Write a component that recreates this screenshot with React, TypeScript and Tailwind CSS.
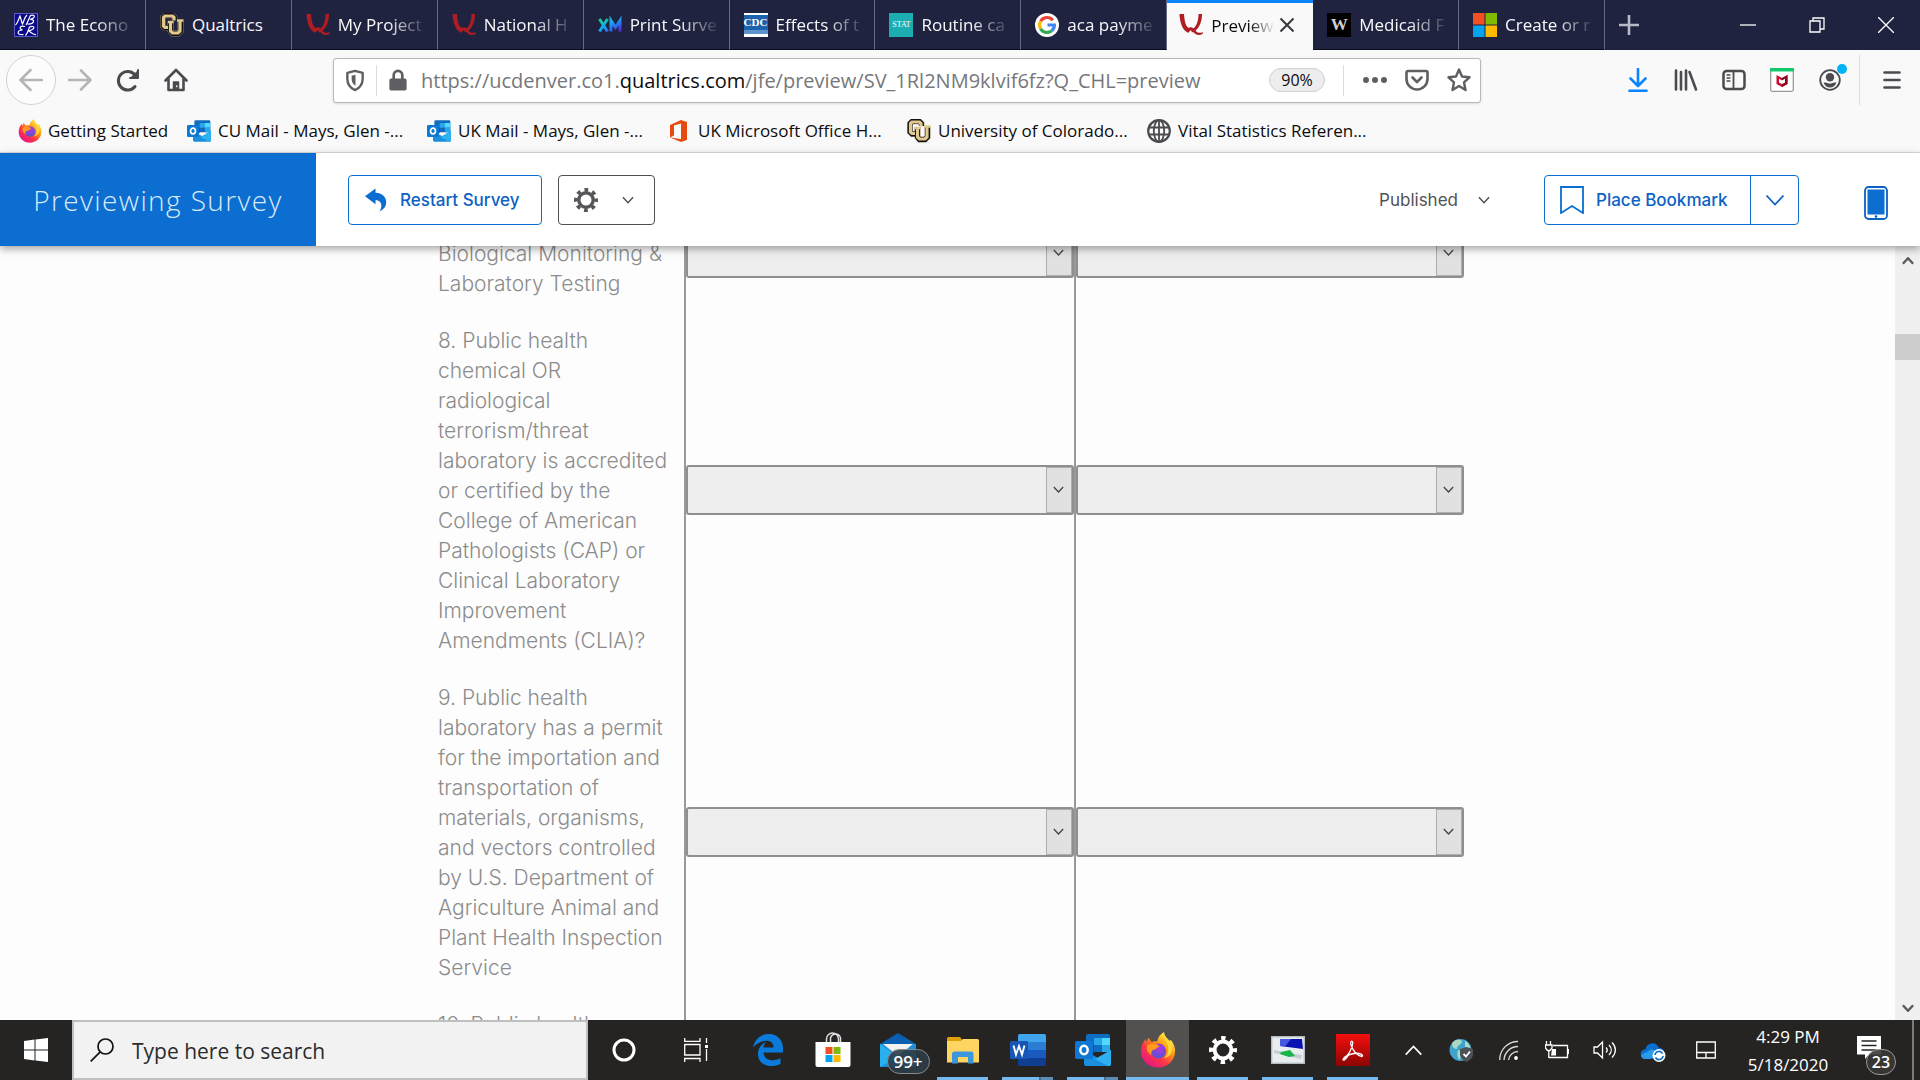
import type { ReactNode } from 'react';

const seg = "font-['Open_Sans',sans-serif]";

/* ---------- favicons ---------- */

function QualtricsQ() {
  return (
    <svg viewBox="0 0 24 24" className="h-6 w-6 shrink-0">
      <path d="M.5 1 H5 C5.500 8 6.500 13.500 10.500 15.500 L9.500 20 C3.500 17.500 .8 9.500 .5 1 Z" fill="#b01c22" />
      <path d="M19.500 1 H23 C23 9 20 17 13 19.500 L12 17 C17.500 14.500 19.500 8 19.500 1 Z" fill="#b01c22" />
      <path d="M7.500 17 C10.500 12.500 14.500 14 16.500 17.500 C18 20 21 20.500 24 19 L23.500 21 C20 23 16 22 14 18.500 C12.500 16.500 11 17 10 19.500 Z" fill="#b01c22" />
    </svg>
  );
}

function CuLogo() {
  return (
    <svg viewBox="0 0 24 24" className="h-6 w-6 shrink-0" fill="none">
      <path d="M14.500 7 V4.500 L12.500 2.500 H5 L3 4.500 V13 L5 15 H10" stroke="#8a8470" strokeWidth="5.600" />
      <path d="M10.500 8 V18 L12.500 20.500 H18 L20.500 18 V8" stroke="#8a8470" strokeWidth="6" />
      <path d="M14.500 7 V4.500 L12.500 2.500 H5 L3 4.500 V13 L5 15 H10" stroke="#14120e" strokeWidth="4.800" />
      <path d="M14 7.500 V4.500 L12.500 3 H5 L3.500 4.500 V13 L5 14.500 H9" stroke="#e0c88f" strokeWidth="3.200" />
      <path d="M10.500 9 V18 L12.500 20.500 H18 L20.500 18 V8" stroke="#14120e" strokeWidth="5" />
      <path d="M10.500 10 V18 L12.500 20 H18 L20 18 V8" stroke="#e0c88f" strokeWidth="3.200" />
      <path d="M8 9 H13.500 M17 7.500 H23.500" stroke="#e0c88f" strokeWidth="2.600" />
    </svg>
  );
}

function NberIcon() {
  return (
    <svg viewBox="0 0 24 24" className="h-6 w-6 shrink-0">
      <rect width="24" height="24" fill="#0a0a8c" />
      <rect x=".5" y=".5" width="23" height="23" fill="none" stroke="#5c5cc8" />
      <path d="M1.500 12 C4 10 4.500 6 6 3 C7 6 7.500 9 8.500 11 C10 8 10.500 4 13 2 M12 12 C14 9 15 5 16.500 2.500 C21 1 22.500 4.500 16 6.500 C22 6 20 11.500 13.500 11 M11 13.500 C6.500 12 4 15.500 8.500 17 C3 17 2 22.500 9.500 21.500 M11.500 22.500 C14 20 14.500 17 15.500 14 C21 12 22 16 14.500 18 C17 19 18.500 22 22 21.500" fill="none" stroke="#fff" strokeWidth="1.200" />
    </svg>
  );
}

function XmIcon() {
  return (
    <svg viewBox="0 0 24 24" className="h-6 w-6 shrink-0">
      <defs>
        <linearGradient id="xm" x1="0" y1="0" x2="1" y2="1">
          <stop offset="0" stopColor="#22d07c" />
          <stop offset=".45" stopColor="#13a5f3" />
          <stop offset="1" stopColor="#5b1fe0" />
        </linearGradient>
      </defs>
      <path d="M1.500 6 L9.500 18.500 M9.500 6 L1.500 18.500 M13 18.500 V7.500 L17.500 14.500 L22 7.500 V18.500" fill="none" stroke="url(#xm)" strokeWidth="3" />
    </svg>
  );
}

function CdcIcon() {
  return (
    <span className="flex h-6 w-6 shrink-0 flex-col items-stretch justify-center bg-white">
      <span className="flex h-[15px] items-center justify-center bg-[#1d62ad] font-['Liberation_Serif',serif] text-[11px] font-bold leading-none text-white">CDC</span>
      <span className="h-[4px] bg-[#5f93cb]" />
    </span>
  );
}

function StatIcon() {
  return <span className="flex h-6 w-6 shrink-0 items-center justify-center bg-[#1cadb3] font-['Liberation_Serif',serif] text-[8px] leading-none text-white">STAT</span>;
}

function GoogleIcon() {
  return (
    <svg viewBox="0 0 24 24" className="h-6 w-6 shrink-0">
      <circle cx="12" cy="12" r="12" fill="#fff" />
      <g fill="none" strokeWidth="3.200">
        <path d="M17.800 7.200 A7.400 7.400 0 0 0 5.600 8.300" stroke="#ea4335" />
        <path d="M5.600 8.300 A7.400 7.400 0 0 0 5.600 15.700" stroke="#fbbc05" />
        <path d="M5.600 15.700 A7.400 7.400 0 0 0 16.800 17.700" stroke="#34a853" />
        <path d="M16.800 17.700 A7.400 7.400 0 0 0 19.400 12 H12.500" stroke="#4285f4" />
      </g>
    </svg>
  );
}

function WIcon() {
  return <span className="flex h-6 w-6 shrink-0 items-center justify-center bg-black font-['Liberation_Serif',serif] text-[17px] font-bold leading-none text-[#d0d0d0]">W</span>;
}

function MicrosoftIcon() {
  return (
    <svg viewBox="0 0 24 24" className="h-6 w-6 shrink-0">
      <path d="M0 0h11.500v11.500H0z" fill="#f25022" />
      <path d="M12.500 0H24v11.500H12.500z" fill="#7fba00" />
      <path d="M0 12.500h11.500V24H0z" fill="#00a4ef" />
      <path d="M12.500 12.500H24V24H12.500z" fill="#ffb900" />
    </svg>
  );
}

function FirefoxIcon({ className }: { className: string }) {
  return (
    <svg viewBox="0 0 36 36" className={className}>
      <defs>
        <linearGradient id="ffa" x1=".85" y1=".1" x2=".2" y2=".95">
          <stop offset="0" stopColor="#fff44f" />
          <stop offset=".35" stopColor="#ff980e" />
          <stop offset=".65" stopColor="#ff3647" />
          <stop offset="1" stopColor="#e31587" />
        </linearGradient>
        <radialGradient id="ffb" cx=".55" cy=".3" r=".8">
          <stop offset="0" stopColor="#b833e1" />
          <stop offset="1" stopColor="#3f5ccf" />
        </radialGradient>
      </defs>
      <path d="M18 35.500 C8 35.500 1 28 1 19 C1 14 3 10 5.500 7 L6.500 10 L8.500 5.500 L11.500 10 C13.500 9 15.500 9 17 9.500 C18 5 20.500 2 24 0 C24 4 27 6 29 9 L31 8 C34 12 35.500 16 35 20 C34.500 29 27 35.500 18 35.500 Z" fill="url(#ffa)" />
      <circle cx="18.500" cy="19" r="7.600" fill="url(#ffb)" />
      <path d="M7 14 C10 10 17 11 19.500 14.500 C17 15 16.500 17.500 13 18 C11 19 11 21 11.500 23 C7.500 21 6 17 7 14 Z" fill="#ff9a1a" />
      <path d="M24 0 C23 6 27 9 28 14 C29 19 27 24 24 26 C31 25 34 18 31 11 C29 7 24 5 24 0 Z" fill="#ffd93a" />
    </svg>
  );
}

function OutlookIcon({ className }: { className: string }) {
  return (
    <svg viewBox="0 0 36 34" className={className}>
      <path d="M11 3 a2 2 0 0 1 2-2 h20 a2 2 0 0 1 2 2 v16 H11z" fill="#0f6cc0" />
      <path d="M19 5 h8 v7 h-8z" fill="#28a8ea" />
      <path d="M27 5 h8 v7 h-8z" fill="#50d9ff" />
      <path d="M27 12 h8 v7 h-8z" fill="#28a8ea" />
      <path d="M11 12 h8 v8 h-8z" fill="#0a4f9a" />
      <path d="M9 17 L23 25 L36 17 V31 a2 2 0 0 1-2 2 H11 a2 2 0 0 1-2-2z" fill="#1b8fdd" />
      <path d="M36 17 L20 26 L33 33 H34 a2 2 0 0 0 2-2z" fill="#2fb0f0" />
      <rect x="0" y="8" width="18" height="18" rx="1.800" fill="#0f78d4" />
      <ellipse cx="9" cy="17" rx="3.700" ry="4.200" fill="none" stroke="#fff" strokeWidth="2.500" />
    </svg>
  );
}

function OfficeIcon() {
  return (
    <svg viewBox="0 0 24 24" className="h-6 w-6 shrink-0">
      <path d="M3 6 L14 1 L20 3 V21 L14 23 L3 18.500 L14 20 V4.500 L7 6.500 V16.500 L3 18.500 Z" fill="#e64a0f" />
    </svg>
  );
}

function GlobeIcon() {
  return (
    <svg viewBox="0 0 24 24" className="h-6 w-6 shrink-0" fill="none" stroke="#4a4a4f" strokeWidth="1.800">
      <circle cx="12" cy="12" r="10.800" strokeWidth="2.200" />
      <ellipse cx="12" cy="12" rx="5.200" ry="10.800" />
      <path d="M12 1 V23 M1.500 8.500 H22.500 M1.500 15.500 H22.500" />
    </svg>
  );
}

/* ---------- browser chrome ---------- */

const tabsBefore: [string, ReactNode][] = [
  ['The Econo', <NberIcon />],
  ['Qualtrics', <CuLogo />],
  ['My Project', <QualtricsQ />],
  ['National H', <QualtricsQ />],
  ['Print Surve', <XmIcon />],
  ['Effects of t', <CdcIcon />],
  ['Routine ca', <StatIcon />],
  ['aca payme', <GoogleIcon />],
];
const tabsAfter: [string, ReactNode][] = [
  ['Medicaid F', <WIcon />],
  ['Create or r', <MicrosoftIcon />],
];

function Tab({ title, icon }: { title: string; icon: ReactNode }) {
  return (
    <button className="flex h-[50px] min-w-0 items-center border-r border-b border-r-[#6a6b80] border-b-[#0c0c20] pl-[14px] pr-2 text-[#f9f9fa]">
      {icon}
      <span className={`ml-2 min-w-0 flex-1 overflow-hidden whitespace-nowrap pt-px text-left ${title === 'Qualtrics' ? '' : 'mask-r-from-55%'}`}>{title}</span>
    </button>
  );
}

function TabStrip() {
  return (
    <div className="flex h-[50px] bg-[#202340] text-[17px]">
      <div className="grid w-[1605px] grid-cols-11">
        {tabsBefore.map(([t, i]) => (
          <Tab key={t} title={t} icon={i} />
        ))}
        <div className="flex h-[50px] min-w-0 items-center border-t-[3px] border-[#0a84ff] bg-[#f9f9fa] pb-[3px] pl-3 pr-[18px] text-[#0c0c0d]">
          <QualtricsQ />
          <span className="ml-2 min-w-0 flex-1 overflow-hidden whitespace-nowrap pt-px mask-r-from-60%">Preview</span>
          <button aria-label="Close tab" className="ml-1">
            <svg viewBox="0 0 16 16" className="h-4 w-4" stroke="#38383d" strokeWidth="2">
              <path d="M1.500 1.500 L14.500 14.500 M14.500 1.500 L1.500 14.500" />
            </svg>
          </button>
        </div>
        {tabsAfter.map(([t, i]) => (
          <Tab key={t} title={t} icon={i} />
        ))}
      </div>
      <button aria-label="New tab" className="flex w-12 items-center justify-center">
        <svg viewBox="0 0 22 22" className="h-[22px] w-[22px]" stroke="#b9bac6" strokeWidth="2.600">
          <path d="M11 1 V21 M1 11 H21" />
        </svg>
      </button>
      <div className="ml-auto flex">
        <button aria-label="Minimize" className="flex w-[69px] items-center justify-center">
          <svg viewBox="0 0 16 16" className="h-4 w-4" stroke="#fff" strokeWidth="1.300"><path d="M0 8 H16" /></svg>
        </button>
        <button aria-label="Restore" className="flex w-[69px] items-center justify-center">
          <svg viewBox="0 0 16 16" className="h-4 w-4" fill="none" stroke="#fff" strokeWidth="1.300">
            <path d="M1 4 H11 V15 H1z M4 4 V1 H15 V12 H11" />
          </svg>
        </button>
        <button aria-label="Close" className="flex w-[69px] items-center justify-center">
          <svg viewBox="0 0 16 16" className="h-4 w-4" stroke="#fff" strokeWidth="1.300"><path d="M0 0 L16 16 M16 0 L0 16" /></svg>
        </button>
      </div>
    </div>
  );
}

function ToolButton({ label, children }: { label: string; children: ReactNode }) {
  return (
    <button aria-label={label} className="relative flex h-12 w-12 items-center justify-center">
      {children}
    </button>
  );
}

function NavBar() {
  return (
    <div className="flex h-[60px] items-center">
      <button aria-label="Back" className="ml-[6px] flex h-[50px] w-[50px] shrink-0 items-center justify-center rounded-full border border-[#d2d2d4] bg-[#fcfcfc]">
        <svg viewBox="0 0 24 24" className="h-6 w-6" fill="none" stroke="#b5b5b7" strokeWidth="2.600" strokeLinecap="round" strokeLinejoin="round">
          <path d="M23 12 H1.500 M11.500 2 L1.500 12 L11.500 22" />
        </svg>
      </button>
      <ToolButton label="Forward">
        <svg viewBox="0 0 24 24" className="h-6 w-6" fill="none" stroke="#b5b5b7" strokeWidth="2.600" strokeLinecap="round" strokeLinejoin="round">
          <path d="M1 12 H22.500 M13 2.500 L22.500 12 L13 21.500" />
        </svg>
      </ToolButton>
      <ToolButton label="Reload">
        <svg viewBox="0 0 24 24" className="h-6 w-6" fill="none" stroke="#4a4a4f" strokeWidth="3" strokeLinecap="round">
          <path d="M19 18.500 A9.300 9.300 0 1 1 20 8.500" />
          <path d="M22 2 V10 H14" fill="#4a4a4f" strokeWidth="2" strokeLinejoin="round" />
        </svg>
      </ToolButton>
      <ToolButton label="Home">
        <svg viewBox="0 0 24 24" className="h-6 w-6" fill="none" stroke="#4a4a4f" strokeWidth="2.600" strokeLinecap="round" strokeLinejoin="round">
          <path d="M1.500 12.500 L12 2 L22.500 12.500 M4.500 11 V22 H19.500 V11" />
          <path d="M9.500 21 V14 H14.500 V21 z" fill="#4a4a4f" strokeWidth="1.500" />
          <path d="M12.800 18v.5" stroke="#fff" strokeWidth="1.500" />
        </svg>
      </ToolButton>
      <div className="ml-[133px] mr-[133px] flex h-[45px] flex-1 items-center rounded-[3px] border border-[#b8b8ba] bg-white shadow-sm">
        <button aria-label="Tracking protection" className="flex w-[42px] justify-center">
          <svg viewBox="0 0 20 24" className="h-[23px] w-5" fill="none" stroke="#5f5f63" strokeWidth="2.500">
            <path d="M10 2 L18 4 V10 C18 16 15 20 10 22 C5 20 2 16 2 10 V4 Z" strokeLinejoin="round" />
            <path d="M10.500 6 V17.500 C7.500 16 6.500 13 6.500 10 V7 Z" fill="#5f5f63" stroke="none" />
          </svg>
        </button>
        <span className="h-[31px] w-px bg-[#dcdcde]" />
        <button aria-label="Site information" className="flex w-[42px] justify-center">
          <svg viewBox="0 0 20 24" className="h-[23px] w-5">
            <path d="M5.500 11 V6.500 a4.500 4.500 0 0 1 9 0 V11" fill="none" stroke="#5f5f63" strokeWidth="2.800" />
            <rect x="1" y="10" width="18" height="12.500" rx="1.800" fill="#5f5f63" />
          </svg>
        </button>
        <span className="ml-[2px] flex-1 whitespace-nowrap pt-px text-[20px] text-[#77777b]">
          https://ucdenver.co1.<span className="text-[#0c0c0d]">qualtrics.com</span>/jfe/preview/SV_1Rl2NM9klvif6fz?Q_CHL=preview
        </span>
        <button className="h-6 w-14 rounded-full border border-[#d0d0d3] bg-[#ededf0] text-[16px] leading-[22px] text-[#0c0c0d]">90%</button>
        <span className="ml-[18px] mr-[10px] h-[31px] w-px bg-[#dcdcde]" />
        <button aria-label="Page actions" className="flex w-[42px] justify-center">
          <svg viewBox="0 0 24 6" className="h-[6px] w-6" fill="#5f5f63"><circle cx="3" cy="3" r="3" /><circle cx="12" cy="3" r="3" /><circle cx="21" cy="3" r="3" /></svg>
        </button>
        <button aria-label="Save to Pocket" className="flex w-[42px] justify-center">
          <svg viewBox="0 0 24 24" className="h-6 w-6" fill="none" stroke="#5f5f63" strokeWidth="2.600" strokeLinecap="round" strokeLinejoin="round">
            <path d="M3 3 H21 a1.500 1.500 0 0 1 1.500 1.500 V11 a10.500 10.500 0 0 1-21 0 V4.500 A1.500 1.500 0 0 1 3 3 Z" />
            <path d="M7.500 9.500 L12 14 L16.500 9.500" />
          </svg>
        </button>
        <button aria-label="Bookmark page" className="flex w-[42px] justify-center">
          <svg viewBox="0 0 24 24" className="h-6 w-6" fill="none" stroke="#5f5f63" strokeWidth="2.400" strokeLinejoin="round">
            <path d="M12 1.500 L15 8.500 L22.500 9.300 L17 14.300 L18.500 22 L12 18 L5.500 22 L7 14.300 L1.500 9.300 L9 8.500 Z" />
          </svg>
        </button>
      </div>
      <ToolButton label="Downloads">
        <svg viewBox="0 0 20 24" className="h-6 w-5" fill="none" stroke="#0a84ff" strokeWidth="2.600" strokeLinecap="round" strokeLinejoin="round">
          <path d="M10 1 V17 M2.500 10.500 L10 18 L17.500 10.500 M1.500 22.700 H18.500" />
        </svg>
      </ToolButton>
      <ToolButton label="Library">
        <svg viewBox="0 0 24 24" className="h-6 w-6" stroke="#4a4a4f" strokeWidth="2.600" strokeLinecap="round">
          <path d="M2 2.500 V21.500 M7 4 V21.500 M12 2.500 V21.500 M15.500 4 L22 21.500" />
        </svg>
      </ToolButton>
      <ToolButton label="Sidebars">
        <svg viewBox="0 0 24 24" className="h-6 w-6" fill="none" stroke="#4a4a4f" strokeWidth="2.500" strokeLinecap="round">
          <rect x="1.500" y="3" width="21" height="18" rx="3" />
          <path d="M11.500 3 V21" strokeWidth="1.800" />
          <path d="M5 7 H8 M5 10 H8 M5 13 H8" strokeWidth="1.300" />
        </svg>
      </ToolButton>
      <ToolButton label="McAfee WebAdvisor">
        <svg viewBox="0 0 24 24" className="h-6 w-6">
          <rect x=".7" y=".7" width="22.600" height="22.600" rx="1.500" fill="#fff" stroke="#9a9a9d" strokeWidth="1.300" />
          <path d="M0 0 H24 V3.500 H0z" fill="#12c96b" />
          <path d="M6.500 7 L12 10 L17.500 7 V16 L12 19 L6.500 16 Z" fill="#c8102e" />
          <path d="M12 10 L17.500 7 V16 L12 19 V16 L15 14.500 V11 L12 13z" fill="#8c0a1e" />
          <path d="M9 10.800 L12 12.500 L15 10.800 V14.500 L12 16 L9 14.500z" fill="#fff" />
        </svg>
      </ToolButton>
      <ToolButton label="Account">
        <svg viewBox="0 0 22 22" className="h-[22px] w-[22px]">
          <circle cx="11" cy="11" r="9.800" fill="none" stroke="#4a4a4f" strokeWidth="1.800" />
          <circle cx="11" cy="8.200" r="4.200" fill="#4a4a4f" />
          <path d="M4.500 13.500 C8 13 9 14.500 11 14.500 C13 14.500 14 13 17.500 13.500 C16.500 16.500 14 18.500 11 18.500 C8 18.500 5.500 16.500 4.500 13.500" fill="#4a4a4f" />
        </svg>
        <span className="absolute right-[7px] top-2 h-[10px] w-[10px] rounded-full bg-[#00b3f4]" />
      </ToolButton>
      <span className="ml-[5px] h-[50px] w-px bg-[#dcdcde]" />
      <button aria-label="Open menu" className="mr-1 flex h-12 w-[56px] items-center justify-center pl-2">
        <svg viewBox="0 0 18 18" className="h-[18px] w-[18px]" stroke="#4a4a4f" strokeWidth="2.600" strokeLinecap="round">
          <path d="M1.500 1.500 H16.500 M1.500 9 H16.500 M1.500 16.500 H16.500" />
        </svg>
      </button>
    </div>
  );
}

const outlookSmall = 'h-6 w-6 shrink-0';
const bookmarks: [string, ReactNode][] = [
  ['CU Mail - Mays, Glen -...', <OutlookIcon className={outlookSmall} />],
  ['UK Mail - Mays, Glen -...', <OutlookIcon className={outlookSmall} />],
  ['UK Microsoft Office H...', <OfficeIcon />],
  ['University of Colorado...', <CuLogo />],
  ['Vital Statistics Referen...', <GlobeIcon />],
];

function BookmarksBar() {
  return (
    <div className="flex h-[43px] items-center border-b border-[#dcdcde] pl-[18px] text-[17px] text-[#0c0c0d]">
      <a href="#" className="flex w-[169px] items-center gap-[6px] whitespace-nowrap">
        <FirefoxIcon className="h-6 w-6 shrink-0" />
        Getting Started
      </a>
      {bookmarks.map(([t, i]) => (
        <a key={t} href="#" className="flex w-[240px] items-center gap-[7px] whitespace-nowrap">
          {i}
          {t}
        </a>
      ))}
    </div>
  );
}

/* ---------- survey page ---------- */

function Caret({ className, w }: { className: string; w: number }) {
  return (
    <svg viewBox="0 0 20 12" className={className} fill="none" stroke="currentColor" strokeWidth={w}>
      <path d="M1.500 1.500 L10 10.500 L18.500 1.500" />
    </svg>
  );
}

function GearShape({ className }: { className: string }) {
  return (
    <svg viewBox="0 0 24 24" className={className}>
      <g fill="none" stroke="currentColor">
        <circle cx="12" cy="12" r="7.200" strokeWidth="3.400" />
        <circle cx="12" cy="12" r="10.200" strokeWidth="3.600" strokeDasharray="3.800 4.211" strokeDashoffset="1.900" />
      </g>
    </svg>
  );
}

function PreviewHeader() {
  return (
    <header className="relative z-10 flex h-[93px] items-center bg-white font-[Inter,sans-serif] text-[17px] font-medium shadow-[0_3px_8px_rgba(0,0,0,0.35)]">
      <h1 className="flex h-full w-[316px] items-center justify-center bg-[#0b6ed0] font-['Open_Sans',sans-serif] text-[28px] font-light tracking-wider text-[#d9e9f9]">Previewing Survey</h1>
      <button className="ml-8 flex h-[50px] w-[194px] items-center gap-3 rounded-[4px] border border-[#0b6ed0] pl-4 text-[#0b62c4]">
        <svg viewBox="0 0 24 24" className="h-6 w-[23px]" fill="#0b6ed0">
          <path d="M0 8 L11 0 V4.500 C19 5 23 10 22 16 C21.500 19.500 19 22.500 15 24 C18 20 18.500 12.500 11 12 V16.500 Z" />
        </svg>
        <span className="whitespace-nowrap pt-[2px]">Restart Survey</span>
      </button>
      <button aria-label="Survey options" className="ml-4 flex h-[50px] w-[97px] items-center gap-6 rounded-[4px] border border-[#4d5054] pl-[15px] text-[#54565a]">
        <GearShape className="h-6 w-6" />
        <Caret className="h-2 w-3" w={2.6} />
      </button>
      <button className="ml-auto flex items-center gap-[20px] font-normal text-[#505357]">
        <span className="pt-[2px]">Published</span>
        <Caret className="h-2 w-3" w={2.6} />
      </button>
      <div className="ml-[54px] flex h-[50px] rounded-[4px] border border-[#0b6ed0] text-[#0b62c4]">
        <button className="flex w-[205px] items-center gap-3 pl-[15px]">
          <svg viewBox="0 0 24 28" className="h-7 w-6" fill="none" stroke="#0b6ed0" strokeWidth="1.800">
            <path d="M1 1 H23 V27 L12 20 L1 27 Z" />
          </svg>
          <span className="whitespace-nowrap pt-[2px]">Place Bookmark</span>
        </button>
        <button aria-label="Bookmark options" className="flex w-12 items-center justify-center border-l border-[#0b6ed0]">
          <Caret className="h-3 w-5" w={1.8} />
        </button>
      </div>
      <button aria-label="Mobile preview" className="ml-[65px] mr-8 pt-[7px]">
        <svg viewBox="0 0 24 34" className="h-[34px] w-6">
          <rect x="1" y="1" width="22" height="32" rx="3.500" fill="#fff" stroke="#0b62c4" strokeWidth="1.800" />
          <rect x="3.500" y="3.500" width="17" height="25" fill="#0b6ed0" />
          <circle cx="12" cy="30.600" r="1.300" fill="#0b62c4" />
        </svg>
      </button>
    </header>
  );
}

const rows: { id: string; lines: string[]; tall?: boolean }[] = [
  { id: 'q7', lines: ['Biological Monitoring &', 'Laboratory Testing'], tall: true },
  {
    id: 'q8',
    lines: ['8. Public health', 'chemical OR', 'radiological', 'terrorism/threat', 'laboratory is accredited', 'or certified by the', 'College of American', 'Pathologists (CAP) or', 'Clinical Laboratory', 'Improvement', 'Amendments (CLIA)?'],
  },
  {
    id: 'q9',
    lines: ['9. Public health', 'laboratory has a permit', 'for the importation and', 'transportation of', 'materials, organisms,', 'and vectors controlled', 'by U.S. Department of', 'Agriculture Animal and', 'Plant Health Inspection', 'Service'],
  },
  { id: 'q10', lines: ['10. Public health'], tall: true },
];

function AnswerSelect({ label }: { label: string }) {
  return (
    <div className="relative h-[50px]">
      <select aria-label={label} className="h-full w-full appearance-none rounded-[3px] border-2 border-[#8f8f8f] bg-[#eeeeee]" />
      <span className="pointer-events-none absolute inset-y-[2px] right-[2px] flex w-[26px] items-center justify-center border border-[#adadad] bg-[#e1e1e1] pr-[2px] text-[#444]">
        <Caret className="h-[7px] w-[11px]" w={2.4} />
      </span>
    </div>
  );
}

function SurveyPage() {
  return (
    <div className="flex min-h-0 flex-1 overflow-hidden bg-[#fdfdfd]">
      <div className="min-w-0 flex-1 overflow-hidden">
        <div className="mx-auto -mt-[52px] w-[1033px] pl-[7px]">
          <table className="w-full table-fixed border-collapse">
            <colgroup>
              <col className="w-[247px]" />
              <col className="w-[390px]" />
              <col />
            </colgroup>
            <tbody>
              {rows.map((r) => (
                <tr key={r.id} className={r.tall ? 'h-[117px]' : ''}>
                  <th scope="row" className={`${r.id === 'q7' ? 'align-bottom' : 'align-top'} pb-[12px] pt-[15px] text-left font-[Inter,sans-serif] text-[21px] font-light leading-[30px] text-[#8c8c8c]`}>
                    {r.lines.map((l) => (
                      <span key={l} className="block whitespace-nowrap">{l}</span>
                    ))}
                  </th>
                  <td className="border-l-2 border-[#999999] p-0 align-middle"><AnswerSelect label={`${r.lines[0]}, first answer`} /></td>
                  <td className="border-l-2 border-[#999999] p-0 align-middle"><AnswerSelect label={`${r.lines[0]}, second answer`} /></td>
                </tr>
              ))}
            </tbody>
          </table>
        </div>
      </div>
      <div className="flex w-[25px] shrink-0 flex-col items-center bg-[#f0f0f0] text-[#5a5a5a]">
        <span className="flex h-[29px] items-center"><Caret className="h-2 w-3 rotate-180" w={4} /></span>
        <span className="mt-[59px] h-[26px] w-full bg-[#cdcdcd]" />
        <span className="mt-auto flex h-6 items-center"><Caret className="h-2 w-3" w={4} /></span>
      </div>
    </div>
  );
}

/* ---------- taskbar ---------- */

function TaskApp({ label, state, children }: { label: string; state?: 'open' | 'multi' | 'active'; children: ReactNode }) {
  return (
    <button aria-label={label} className="relative flex h-full w-[65px] items-center justify-center">
      {state === 'active' && <span className="absolute inset-x-px inset-y-0 bg-[#53514f]" />}
      <span className="relative">{children}</span>
      {state === 'open' && <span className="absolute bottom-0 left-[7px] h-[3px] w-[51px] bg-[#76b9ed]" />}
      {state === 'active' && <span className="absolute inset-x-px bottom-0 h-[3px] bg-[#76b9ed]" />}
      {state === 'multi' && (
        <span className="absolute bottom-0 left-[7px] flex h-[3px] w-[51px] bg-[#5a8cb4]">
          <span className="w-[39px] border-r-2 border-[#486c8a] bg-[#76b9ed]" />
        </span>
      )}
    </button>
  );
}

function Tray({ label, children }: { label: string; children: ReactNode }) {
  return (
    <button aria-label={label} className="flex h-full w-12 items-center justify-center">
      {children}
    </button>
  );
}

function Taskbar() {
  return (
    <footer className="flex h-[60px] shrink-0 bg-[#262423] text-white">
      <button aria-label="Start" className="flex w-[72px] items-center justify-center">
        <svg viewBox="0 0 24 24" className="h-6 w-6" fill="#fff">
          <path d="M0 3 L10.500 1.600 V11.500 H0z M11.500 1.500 L24 0 V11.500 H11.500z M0 12.500 H10.500 V22.400 L0 21z M11.500 12.500 H24 V24 L11.500 22.500z" />
        </svg>
      </button>
      <label className="flex w-[516px] items-center border-2 border-[#bfbfbf] bg-[#f2f2f2] pl-4">
        <svg viewBox="0 0 24 24" className="h-6 w-6 shrink-0" fill="none" stroke="#111" strokeWidth="1.700">
          <circle cx="15.500" cy="8.500" r="7.500" />
          <path d="M10.200 13.800 L.7 23.300" />
        </svg>
        <input aria-label="Search" placeholder="Type here to search" className="ml-[18px] min-w-0 flex-1 bg-transparent pt-[3px] text-[21px] outline-none placeholder:text-[#2b2b2b] placeholder:opacity-100" />
      </label>
      <button aria-label="Cortana" className="flex w-[72px] items-center justify-center">
        <svg viewBox="0 0 24 24" className="h-6 w-6"><circle cx="12" cy="12" r="10" fill="none" stroke="#fff" strokeWidth="3" /></svg>
      </button>
      <button aria-label="Task View" className="flex w-[75px] items-center justify-center pr-[3px]">
        <svg viewBox="0 0 24 24" className="h-6 w-6" fill="none" stroke="#fff" strokeWidth="1.300">
          <path d="M.7 0 V3.300 H16 V0 M.7 6.500 H16 V17 H.7z M.7 24 V20.500 H16 V24 M22.500 0 V5 M22.500 11 V23" />
          <rect x="21" y="7" width="3" height="3" fill="#fff" stroke="none" />
        </svg>
      </button>
      <TaskApp label="Edge">
        <svg viewBox="0 0 30 32" className="h-8 w-[30px]">
          <path d="M0 13.500 C2 4 9 0 16 0 C25 0 30 7 30 14.500 V18.500 H10.500 C11 27 21 28 27.500 24 V30 C17 35 5 31 5 20 C5 14 9 9.500 13 8 C11 10 10.500 12 10.500 13.500 H20.500 C21 4 7 5 0 13.500 Z" fill="#0a7bdc" />
        </svg>
      </TaskApp>
      <TaskApp label="Microsoft Store">
        <svg viewBox="0 0 36 36" className="h-9 w-9">
          <path d="M11.500 11 V7 a6 6 0 0 1 12 0 V11 M15.500 11 V6 a5 5 0 0 1 10 2 V11" fill="none" stroke="#ddd" strokeWidth="1.500" />
          <path d="M.5 10 H35.500 V33 a2 2 0 0 1-2 2 H2.500 a2 2 0 0 1-2-2z" fill="#fff" />
          <path d="M10.500 15 h7 v7 h-7z" fill="#f25022" />
          <path d="M18.500 15 h7 v7 h-7z" fill="#7fba00" />
          <path d="M10.500 23 h7 v7 h-7z" fill="#00a4ef" />
          <path d="M18.500 23 h7 v7 h-7z" fill="#ffb900" />
        </svg>
      </TaskApp>
      <TaskApp label="Mail, 99+ unread">
        <svg viewBox="0 0 36 34" className="h-[34px] w-9">
          <path d="M0 11 L18 0 L36 11z" fill="#0b5fae" />
          <path d="M0 11 H36 V34 H0z" fill="#1b8fdc" />
          <path d="M3 11 H33 L18 23z" fill="#f2f2f2" />
          <path d="M0 11 L18 24 L0 34z" fill="#29b0ef" />
        </svg>
        <span className="absolute -bottom-[7px] left-[7px] flex h-[25px] w-[43px] items-center justify-center rounded-full border border-[#8a8a8a] bg-[#2e3d47]/90 text-[17px] font-semibold">99+</span>
      </TaskApp>
      <TaskApp label="File Explorer" state="open">
        <svg viewBox="0 0 32 27" className="h-[27px] w-8">
          <path d="M0 1.500 A1.500 1.500 0 0 1 1.500 0 H13 L16 4 H0z" fill="#e0a008" />
          <path d="M0 4 H14 L16 2 H30.500 A1.500 1.500 0 0 1 32 3.500 V25.500 H0z" fill="#ffd561" />
          <path d="M5 26.500 V17 a2.500 2.500 0 0 1 2.500-2.500 H24 A2.500 2.500 0 0 1 26.500 17 V26.500 H21 V20 H11 V26.500z" fill="#3a97dd" />
        </svg>
      </TaskApp>
      <TaskApp label="Word" state="multi">
        <svg viewBox="0 0 36 32" className="h-8 w-9">
          <path d="M8 1.500 A1.500 1.500 0 0 1 9.500 0 H34.500 A1.500 1.500 0 0 1 36 1.500 V8 H8z" fill="#41a5ee" />
          <path d="M8 8 h28 v8 H8z" fill="#2b7cd3" />
          <path d="M8 16 h28 v8 H8z" fill="#185abd" />
          <path d="M8 24 h28 v6.500 a1.500 1.500 0 0 1-1.500 1.500 h-25 A1.500 1.500 0 0 1 8 30.500z" fill="#103f91" />
          <rect y="7" width="18" height="18" rx="1.500" fill="#1756b5" />
          <path d="M3.500 11.500 L6 20.500 L9 12 L12 20.500 L14.500 11.500" fill="none" stroke="#fff" strokeWidth="1.900" />
        </svg>
      </TaskApp>
      <TaskApp label="Outlook" state="multi"><OutlookIcon className="h-[34px] w-9" /></TaskApp>
      <TaskApp label="Firefox" state="active"><FirefoxIcon className="h-9 w-9" /></TaskApp>
      <TaskApp label="Settings" state="open">
        <GearShape className="h-7 w-7" />
      </TaskApp>
      <TaskApp label="Remote Desktop" state="open">
        <svg viewBox="0 0 34 28" className="h-7 w-[34px]">
          <rect x=".7" y=".7" width="32.600" height="26.600" fill="#e9edf0" stroke="#b4bcc2" strokeWidth="1.400" />
          <path d="M9 3 H31 L32 13 L9 10z" fill="#0a12b4" />
          <path d="M9 3 H20 L14 10.500 L9 10z" fill="#4658e0" />
          <path d="M3 14 L18 17 L31 19 L30 23 L16 20 L3 17z" fill="#c5ccd1" />
          <path d="M10 16 L19 14 L24 20 L18 21 L9 18z" fill="#17b54a" />
        </svg>
      </TaskApp>
      <TaskApp label="Acrobat Reader" state="open">
        <svg viewBox="0 0 34 32" className="h-8 w-[34px]">
          <defs><linearGradient id="ac" x1="0" y1="0" x2="0" y2="1"><stop offset="0" stopColor="#f5100e" /><stop offset="1" stopColor="#8c0503" /></linearGradient></defs>
          <rect width="34" height="32" fill="url(#ac)" />
          <path d="M7.500 25.500 C12 22 16.500 14 16.800 9 C16 5.500 13.800 7.500 15 11 C17 16.500 21 21.500 26 22.500 C28 21 24 18.500 18 19.500 C12 20.500 8 23 7 25.500 C7.500 27.500 10.500 24.500 12.500 21" fill="none" stroke="#fff" strokeWidth="1.300" />
        </svg>
      </TaskApp>
      <div className="ml-auto flex h-full">
        <Tray label="Show hidden icons"><Caret className="h-[11px] w-[19px] rotate-180" w={1.8} /></Tray>
        <Tray label="Network security">
          <svg viewBox="0 0 24 24" className="h-6 w-6">
            <circle cx="11.500" cy="12" r="11" fill="#3fa3cf" />
            <path d="M3 5 C7 0 13 1 13 4 C12 7 8 7 8 11 C4 11 3 8 3 5 M9 12 C13 12 14 15 12 19 L10 22 C8 18 8 15 9 12 M16 3 C20 5 22 9 21 12 L16 9z" fill="#a9d9c4" />
            <path d="M11 11 L17.500 9 L24 11 V16 C24 20 21 22 17.500 24 C14 22 11 20 11 16z" fill="#4d5257" />
            <path d="M14.500 16 L17 18.500 L21 13.500" fill="none" stroke="#fff" strokeWidth="1.800" />
          </svg>
        </Tray>
        <Tray label="Wi-Fi">
          <svg viewBox="0 0 20 20" className="h-5 w-5" fill="none" stroke="#d8d8d8" strokeWidth="1.400">
            <path d="M.8 20 A18 18 0 0 1 19 1.500 M5 20 A14 14 0 0 1 19 6.500 M9.500 20 A9.500 9.500 0 0 1 19 11.500" />
            <circle cx="17" cy="18" r="1.900" fill="#fff" stroke="none" />
          </svg>
        </Tray>
        <Tray label="Battery">
          <svg viewBox="0 0 24 18" className="h-[18px] w-6" fill="none" stroke="#fff" strokeWidth="1.300">
            <path d="M8 4.500 H22.500 V16.500 H4 M23.500 8 V13 M1.500 0 V4 M5.500 0 V4 M.5 4 H7 V7 L5 9.500 H2.500 L.5 7z M3.800 9.500 V17" />
            <path d="M7 8 H11 V14.500 H6z" fill="#fff" stroke="none" />
          </svg>
        </Tray>
        <Tray label="Volume">
          <svg viewBox="0 0 24 20" className="h-5 w-6" fill="none" stroke="#fff" strokeWidth="1.300">
            <path d="M1 7 H4.500 L9.500 2 V18 L4.500 13 H1z M13 7.500 C14.500 9 14.500 11 13 12.500 M16 5 C19 8 19 12 16 15 M19 2.500 C23.500 7 23.500 13 19 17.500" />
          </svg>
        </Tray>
        <Tray label="OneDrive">
          <svg viewBox="0 0 26 20" className="mt-1 h-5 w-[26px]">
            <path d="M6 16 C-1 16 -1 8 5.500 7 C7 0 17 -1 19 6 C23 6 25 9 24 12 L12 17z" fill="#0a6ed0" />
            <path d="M1 13 L12 7 L20 12 L10 17 H5 C2 17 1 15 1 13" fill="#2a9be8" />
            <circle cx="19" cy="13.500" r="6.500" fill="#fff" />
            <path d="M15 13 A4 4 0 0 1 22.500 11.500 M23 14 A4 4 0 0 1 15.500 15.500" fill="none" stroke="#1471c9" strokeWidth="1.700" />
          </svg>
        </Tray>
        <button aria-label="Touchpad" className="flex w-[58px] items-center justify-center">
          <svg viewBox="0 0 20 18" className="h-[18px] w-5" fill="none" stroke="#fff" strokeWidth="1.300"><path d="M.7 1 H19.300 V17 H.7z M.7 11.500 H19.300 M10 11.500 V17" /></svg>
        </button>
        <button className="flex w-[106px] flex-col items-center justify-center pt-px text-[17px] leading-7">
          <span>4:29 PM</span>
          <span>5/18/2020</span>
        </button>
        <button aria-label="Notifications" className="relative flex w-[71px] items-center justify-center">
          <svg viewBox="0 0 24 24" className="mb-1 mr-[15px] h-6 w-6">
            <path d="M0 0 H24 V18.500 H12 L8 23 V18.500 H0z" fill="#fff" />
            <path d="M4.500 5 H19.500 M4.500 9.500 H19.500 M4.500 14 H19.500" stroke="#262423" strokeWidth="1.300" />
          </svg>
          <span className="absolute bottom-[5px] right-4 flex h-[26px] w-[30px] items-center justify-center rounded-full border border-[#9a9a9a] bg-[#3a3836]/90 text-[16px] font-semibold">23</span>
        </button>
        <span className="mr-[6px] w-[2px] bg-[#7d7b7a]" />
      </div>
    </footer>
  );
}

export default function App() {
  return (
    <div className={`flex h-screen flex-col overflow-hidden bg-[#f9f9fa] ${seg}`}>
      <TabStrip />
      <NavBar />
      <BookmarksBar />
      <PreviewHeader />
      <SurveyPage />
      <Taskbar />
    </div>
  );
}
